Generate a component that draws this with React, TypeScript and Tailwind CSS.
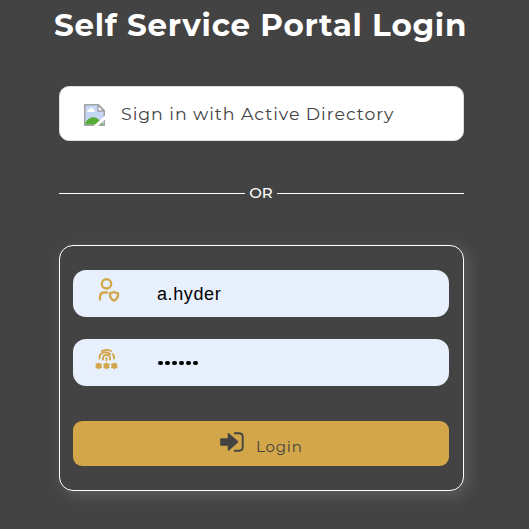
import React from "react";

function BrokenImage() {
  return (
    <svg className="h-[22px] w-[21px] shrink-0" viewBox="0 0 21 22" fill="none">
      <path d="M.75.75H14.500L20.250 6.500V21.250H.75Z" fill="#c5d7f5" stroke="#a3a3a3" strokeWidth="1.500" />
      <path d="M3.500 8c-.8-2 1-3 2-2.500C6 3.500 9 3.500 9.500 5.500c1.500 0 1.800 1.500 1 2.500Z" fill="#fff" />
      <path d="M1.500 20.500v-2C4 14 8 12.500 11 13.500c2 .5 3.500 1.500 4.500 3l4 4Z" fill="#56ac35" />
      <path d="M14 1v6h6Z" fill="#fff" stroke="#a3a3a3" strokeWidth="1.300" />
      <path d="M9.500 22 21 11.500V15.500L14 22Z" fill="#fff" />
    </svg>
  );
}

function UserShield() {
  return (
    <svg className="h-[25px] w-[25px]" viewBox="0 0 25 25" fill="none" stroke="#d2a649" strokeWidth="2.300" strokeLinecap="round" strokeLinejoin="round">
      <circle cx="11.500" cy="6.800" r="4.700" />
      <path d="M5 22.500v-2.500c0-3 2-4.500 4.500-4.500h2.500" />
      <path d="M19 14.800c1.300 1 2.700 1.300 4 1.300.5 3.800-.8 6.200-4 7.500-3.200-1.300-4.500-3.700-4-7.500 1.300 0 2.700-.3 4-1.300Z" />
    </svg>
  );
}

function FingerprintPassword() {
  return (
    <svg className="h-[22px] w-[24px]" viewBox="0 0 24 22" fill="none" stroke="#d2a649" strokeWidth="1.900" strokeLinecap="round">
      <path d="M7 3.200C10 1.500 13 1.500 16 3" />
      <path d="M4.500 10.500V9.500c0-5 6.500-7 10.500-3.500" />
      <path d="M17.800 6.200c1 1.100 1.200 2.500 1.200 4.300" />
      <path d="M8 11.500V10c.3-4.200 6.700-4.200 7 0v1.500" />
      <path d="M11.500 10v2.300" />
      <g strokeWidth="1.500" strokeLinejoin="round" fill="#d2a649">
        <path d="m3.700 15.200.8 1.100 1.700 0-.7 1.600.7 1.600-1.700 0-.8 1.100-.8-1.100-1.700 0 .7-1.600-.7-1.600 1.700 0Z" />
        <path d="m11.500 15.200.8 1.100 1.700 0-.7 1.600.7 1.600-1.700 0-.8 1.100-.8-1.100-1.700 0 .7-1.600-.7-1.600 1.700 0Z" />
        <path d="m19.300 15.200.8 1.100 1.700 0-.7 1.600.7 1.600-1.700 0-.8 1.100-.8-1.100-1.700 0 .7-1.600-.7-1.600 1.700 0Z" />
      </g>
    </svg>
  );
}

function LoginArrow() {
  return (
    <svg className="h-[20px] w-[24px] shrink-0" viewBox="0 0 24 20" fill="none">
      <path d="M1 7h7.500V1.800l9 8-9 8V13H1Z" fill="#434343" stroke="#434343" strokeWidth="1.600" strokeLinejoin="round" />
      <path d="M14 1.200h5c2.400 0 3.700 1.400 3.700 3.600v10c0 2.500-1.300 3.900-3.700 3.900h-5" stroke="#434343" strokeWidth="1.900" />
    </svg>
  );
}

export default function App() {
  return (
    <main className="h-[529px] w-full overflow-hidden bg-[#434343] pr-[65px] pl-[59px] font-['Montserrat','Inter',sans-serif]">
      <h1 className="-mr-[19px] -ml-[21px] h-[86px] pt-[5px] text-center text-[31px] leading-[40px] font-bold tracking-[0.73px] whitespace-nowrap text-white">
        Self Service Portal Login
      </h1>

      <button className="flex h-[55px] w-full items-center rounded-[10px] border border-[#dedede] bg-white pt-[2px] pl-[24px] text-[#434343]">
        <BrokenImage />
        <span className="ml-4 -mt-[2px] text-[17.4px] leading-6 tracking-[0.94px] whitespace-nowrap">Sign in with Active Directory</span>
      </button>

      <div className="mt-10 flex h-6 items-center gap-1 text-[15px] font-medium text-white">
        <span className="h-px w-[186px] bg-white" />
        <span className="w-6 text-center leading-6 whitespace-nowrap">OR</span>
        <span className="h-px flex-1 bg-white" />
      </div>

      <form className="mt-10 h-[246px] rounded-[14px] border border-white pt-6 pr-[14px] pl-[13px] shadow-[4px_4px_15px_rgba(255,255,255,0.15)]">
        <div className="flex h-[47px] rounded-[13px] bg-[#e8f0fe] pl-[22px]">
          <div className="w-[62px] pt-[7px]"><UserShield /></div>
          <span className="font-['Liberation_Sans',sans-serif] text-[18px] leading-[49px] tracking-[0.6px] text-black">a.hyder</span>
        </div>
        <div className="mt-[22px] flex h-[47px] rounded-[13px] bg-[#e8f0fe] pl-[22px]">
          <div className="w-[62px] pt-[9px]"><FingerprintPassword /></div>
          <div className="flex items-center gap-[2.4px] pt-px pl-px">
            {[0, 1, 2, 3, 4, 5].map((dot) => <span key={dot} className="size-[4.6px] rounded-full bg-black" />)}
          </div>
        </div>
        <button type="button" className="mt-[35px] flex h-[45px] w-full rounded-[9px] bg-[#d2a649] pt-[11px] pl-[147px] text-[#434343]">
          <LoginArrow />
          <span className="mt-1 ml-3 text-[15px] leading-[22px] tracking-[0.8px]">Login</span>
        </button>
      </form>
    </main>
  );
}
